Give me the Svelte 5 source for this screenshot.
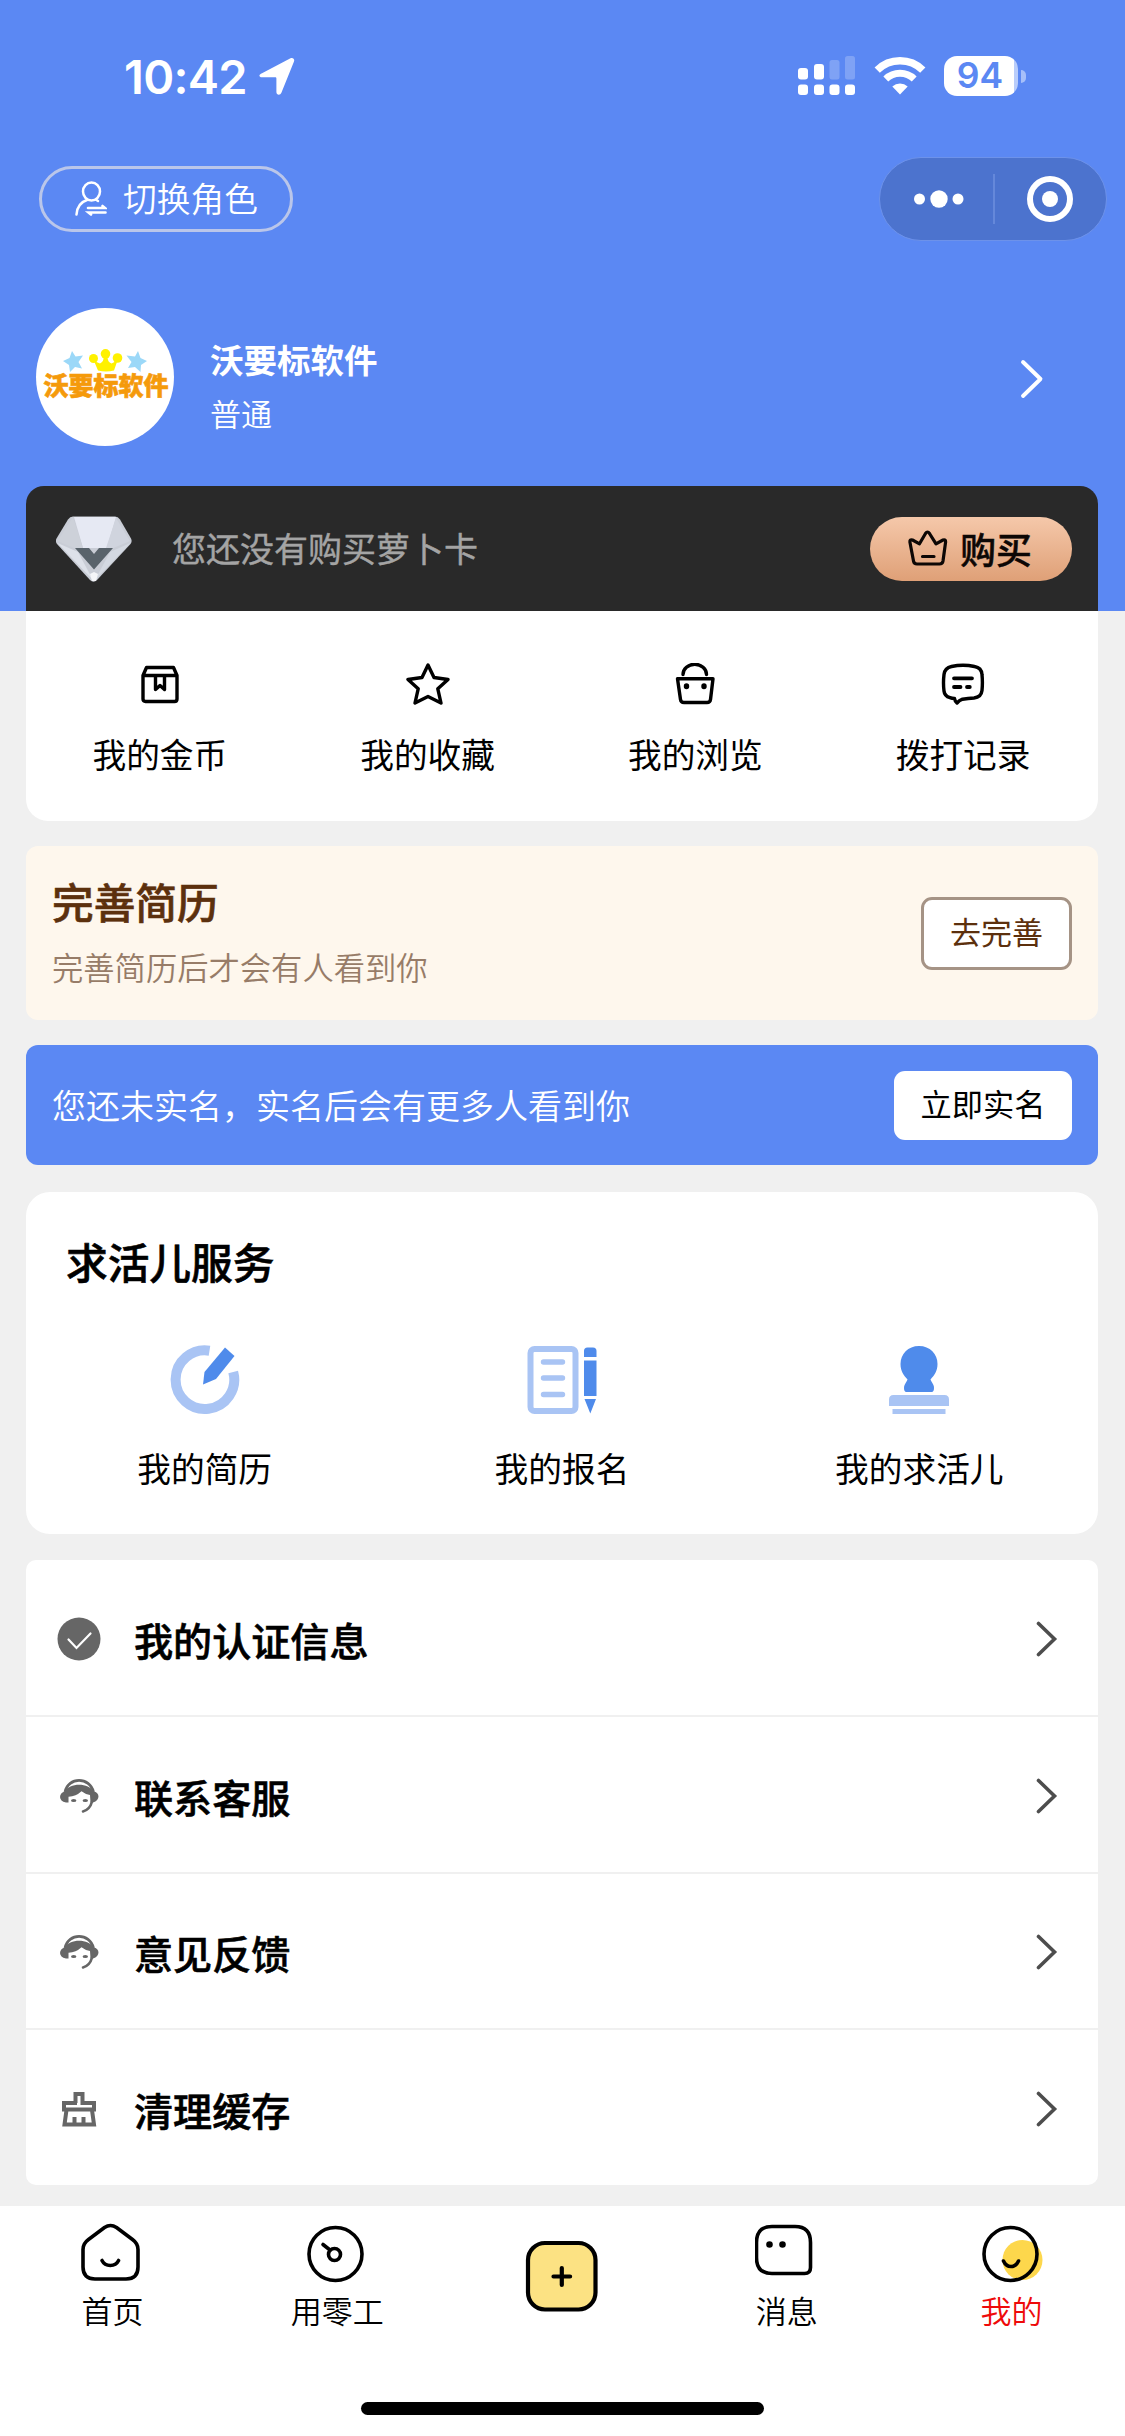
<script>
  const shortcuts = [
    { icon: "coin", label: "我的金币" },
    { icon: "star", label: "我的收藏" },
    { icon: "bag", label: "我的浏览" },
    { icon: "chat", label: "拨打记录" }
  ];

  const services = [
    { icon: "resume", label: "我的简历" },
    { icon: "signup", label: "我的报名" },
    { icon: "stamp", label: "我的求活儿" }
  ];

  const menu = [
    { icon: "verified", label: "我的认证信息" },
    { icon: "support", label: "联系客服" },
    { icon: "support", label: "意见反馈" },
    { icon: "broom", label: "清理缓存" }
  ];

  const tabs = [
    { icon: "home", label: "首页" },
    { icon: "work", label: "用零工" },
    { icon: "add", label: "" },
    { icon: "message", label: "消息" },
    { icon: "mine", label: "我的" }
  ];

  let current = $state("mine");
</script>

<div class="page">
  <header class="hero">
    <div class="status">
      <span class="time">10:42</span>
      <svg class="location" width="36" height="38" viewBox="0 0 36 38" fill="#fff">
        <path d="M3 16.2 31.5 1.3c2.4-1.1 4.4.7 3.5 3.2L22.4 35.8c-1.1 2.7-5 2.4-5-.8V21.6c0-.9-.4-1.3-1.3-1.3H2.9C-.3 20.2-.5 17.6 3 16.2Z" />
      </svg>
      <div class="signals">
        <svg width="58" height="40" viewBox="0 0 58 40" fill="#fff">
          <rect x="0" y="12" width="10" height="11.5" rx="3" />
          <rect x="16" y="8" width="10" height="15.5" rx="3" />
          <rect x="31.5" y="4" width="10" height="19.5" rx="2.5" opacity="0.22" />
          <rect x="47" y="0" width="10" height="23.5" rx="2.5" opacity="0.22" />
          <rect x="0" y="28.5" width="10" height="10.5" rx="3" />
          <rect x="16" y="28.5" width="10" height="10.5" rx="3" />
          <rect x="31.5" y="28.5" width="10" height="10.5" rx="3" />
          <rect x="47" y="28.5" width="10" height="10.5" rx="3" />
        </svg>
        <svg width="52" height="38" viewBox="0 0 52 38" fill="none" stroke="#fff">
          <path d="M3.2 13.2a32.5 32.5 0 0 1 45.6 0" stroke-width="7.5" />
          <path d="M11.8 22a20.5 20.5 0 0 1 28.4 0" stroke-width="7" />
          <path d="M18.3 29.5a11.5 11.5 0 0 1 15.4 0L26 37.5Z" fill="#fff" stroke="none" />
        </svg>
        <div class="battery"><span>94</span></div>
        <i class="knob"></i>
      </div>
    </div>

    <div class="nav">
      <button class="switch">
        <svg width="32" height="35" viewBox="0 0 32 35" fill="none" stroke="#fff" stroke-width="2.5" stroke-linecap="round">
          <ellipse cx="16.500" cy="10.500" rx="8.500" ry="9" />
          <path d="M1.500 33.500C2 26 6 21 12.500 18.800M21 18.800l2 1.200" />
          <path d="M13 27h17l-2.500-2M30.500 31.500h-17l2.500 2" stroke-width="2.600" />
        </svg>
        切换角色
      </button>
      <div class="capsule">
        <svg width="50" height="18" viewBox="0 0 50 18" fill="#fff">
          <circle cx="5.5" cy="9" r="5.5" />
          <circle cx="25" cy="9" r="8.7" />
          <circle cx="44" cy="9" r="5.5" />
        </svg>
        <i class="split"></i>
        <svg width="46" height="46" viewBox="0 0 46 46">
          <circle cx="23" cy="23" r="20" fill="none" stroke="#fff" stroke-width="6" />
          <circle cx="23" cy="23" r="8" fill="#fff" />
        </svg>
      </div>
    </div>

    <div class="profile">
      <div class="avatar">
        <svg width="84" height="24" viewBox="0 0 84 24">
          <g fill="#9bd8f8">
            <path d="m9 2 3.500 5.500 7.500-1-4.500 6.500 3.500 6.500-7-1.500-5 5-1-7L0 12l6.500-3Z" />
            <path d="m75 2-3 5.500-8.500-1 5 6.500-3.500 6 7-1 5.500 5 .5-7 6-4-6.500-3Z" />
          </g>
          <g fill="#fff100">
            <circle cx="30.5" cy="9.5" r="4.5" />
            <circle cx="42.5" cy="4.8" r="4.8" />
            <circle cx="54.5" cy="9" r="4.8" />
            <path d="m31 12 6 2.500q4-2 3.500-6.500h4q0 5 4 6.500l6-3-3.500 10q-8 2-16 0Z" />
          </g>
        </svg>
        <span>沃要标软件</span>
      </div>
      <div class="who">
        <strong>沃要标软件</strong>
        <span>普通</span>
      </div>
      <svg class="go" width="24" height="40" viewBox="0 0 24 40" fill="none" stroke="#fff" stroke-width="3.9" stroke-linecap="round" stroke-linejoin="round">
        <path d="m3 3 17.500 17L3 37" />
      </svg>
    </div>

    <div class="vip">
      <svg width="76" height="66" viewBox="0 0 76 66">
        <path d="M17 .5h42q3 0 5 3l11 19q1.500 3-.5 5.500L41 64q-3.500 3.500-7 0L1 28q-2-2.500-.5-5.500L12 3.500Q14 .5 17 .5Z" fill="#c9cdd6" />
        <path d="M18 1h42l-9 31H27Z" fill="#e6e9f3" />
        <path d="M17 1 1.500 25l19 8 6.500-1Z" fill="#cdd1d9" />
        <path d="m60 2 14 23-19 8-5-1Z" fill="#d0d4de" />
        <path d="m1.500 27 20.500 9 15 28Z" fill="#dde1e9" />
        <path d="M74.500 27 54 36 39 64Z" fill="#d4d9e2" />
        <path d="M19 32h14l5 6 5-6h14L38 53.500Z" fill="#59636b" />
        <path d="m34 58 4-2 4 2-2 7h-4Z" fill="#f4f5f8" />
      </svg>
      <span class="tip">您还没有购买萝卜卡</span>
      <button class="buy">
        <svg width="40" height="36" viewBox="0 0 40 36" fill="none" stroke="#0c0705" stroke-width="3.2" stroke-linecap="round" stroke-linejoin="round">
          <path d="M5.500 31 1.900 12q-.2-3 2.600-2l7 3.800 6-10.300q2-3 4 0l6.500 10.300 7-3.800q2.800-1 2.600 2L35 31q-.5 3-3.500 3h-22.500q-3 0-3.500-3ZM14.500 26.500h11.500" />
        </svg>
        购买
      </button>
    </div>
  </header>

  <section class="shortcuts">
    {#each shortcuts as item}
      <div class="cell">
        <svg width="44" height="42" viewBox="0 0 44 42" fill="none" stroke="#000" stroke-width="3.4" stroke-linecap="round" stroke-linejoin="round">
          {#if item.icon === "coin"}
            <path d="M8.500 4.500h27l3.500 8V36q0 2.500-2.500 2.500h-29Q5 38.500 5 36V12.500ZM5.500 12.500h33" />
            <path d="M17.500 13v13.500l4.500-4 4.500 4V13" />
          {:else if item.icon === "star"}
            <path d="m22 2 6 12.500 14 2-10.200 9.300L35 40l-13-6.500L9 40l3.200-14.200L2 16.500l14-2Z" />
          {:else if item.icon === "bag"}
            <path d="M10 11.500a11.500 10 0 0 1 23.500 0M4.500 15.800h35.500L37.500 36.500q-.4 3-3.500 3H11q-3.100 0-3.500-3Z" />
            <path d="M13.500 23v.6M31 23v.6" stroke-width="5.400" />
          {:else}
            <path d="M10.500 3.500q11.500-2.600 23 0 7 1.200 7.500 8 .8 8 0 16-.8 6.700-8 7.500-6 .4-11.500 1.200-3.200 1.200-5.500 3.800-2-1.300-2.500-4.500-2.500 0-4.500-.8Q3.500 33 3 28q-1-8 0-16.500 .8-6.600 7.500-8Z" />
            <path d="M13 15.300h18M13 24h6.500M26 24h2.800" stroke-width="3.800" />
          {/if}
        </svg>
        <span>{item.label}</span>
      </div>
    {/each}
  </section>

  <section class="resume">
    <div>
      <h2>完善简历</h2>
      <p>完善简历后才会有人看到你</p>
    </div>
    <button>去完善</button>
  </section>

  <section class="realname">
    <span>您还未实名，实名后会有更多人看到你</span>
    <button>立即实名</button>
  </section>

  <section class="services">
    <h2>求活儿服务</h2>
    <div class="row">
      {#each services as item}
        <div class="cell">
          <svg width="70" height="70" viewBox="0 0 70 70">
            {#if item.icon === "resume"}
              <path d="M39.500 5.700A29.300 29.300 0 1 0 63.200 27" fill="none" stroke="#a9c4f4" stroke-width="10" />
              <path d="m55 2.500 9.500 8.500L46 34 33 39.500 34.500 27Z" fill="#4f8beb" />
            {:else if item.icon === "signup"}
              <rect x="3.5" y="4" width="45" height="62" rx="4" fill="none" stroke="#a9c4f4" stroke-width="6" />
              <path d="M16.500 17h19M16.500 33h19M16.500 49.500h19" stroke="#a9c4f4" stroke-width="5.4" stroke-linecap="round" />
              <path d="M57 12V6q0-3.500 3.500-3.500h5.500q3.500 0 3.500 3.500v6ZM57 15.500h12.500V51H57ZM57.500 54H69l-5.700 14.500Z" fill="#4f8beb" />
            {:else}
              <path d="M35 1C46 1 53.500 9 53.500 19c0 7-3 11-7 15.500 1 3.200 3.500 4.500 3.500 8.500 0 2-.5 4-2.500 4h-25c-2 0-2.500-2-2.500-4 0-4 2.500-5.300 3.500-8.500C19.500 30 16.500 26 16.500 19 16.500 9 24 1 35 1Z" fill="#4f8beb" />
              <path d="M5 61v-6.500q0-4.500 4.500-4.500h51q4.500 0 4.500 4.500V61ZM8.500 64h53v5h-53Z" fill="#a9c4f4" />
            {/if}
          </svg>
          <span>{item.label}</span>
        </div>
      {/each}
    </div>
  </section>

  <ul class="menu">
    {#each menu as item}
      <li>
        <svg width="44" height="44" viewBox="0 0 44 44" fill="#666">
          {#if item.icon === "verified"}
            <circle cx="22" cy="22" r="21.5" />
            <path d="m11.500 22.500 8 8.500L33.500 16.500" fill="none" stroke="#fff" stroke-width="2.2" stroke-linecap="round" />
          {:else if item.icon === "support"}
            <path d="M8 18C11 2.500 33 2.500 36.500 18" fill="none" stroke="#666" stroke-width="2.8" />
            <path d="M8 17.500C12 8.500 32 8.500 36.500 17.500 43 18 43.500 26.500 36 28.500H33.500L33 21Q28.500 20.500 24.500 17.300 19 22.500 11.500 22.800V28.500H9C1 27.500 1.500 18.500 8 17.500Z" />
            <path d="M35 27.500Q33 35.500 26 37.500" fill="none" stroke="#666" stroke-width="2.6" stroke-linecap="round" />
            <ellipse cx="16.700" cy="26.500" rx="2.700" ry="1.600" />
            <ellipse cx="28.300" cy="26.500" rx="2.700" ry="1.600" />
          {:else}
            <path d="M18.500 16V7h7v9H37v6.500H7V16h13M9.500 23 7.500 37.500h29.500L35 23M17.500 37v-7M26.500 37v-7" fill="none" stroke="#666" stroke-width="4" />
          {/if}
        </svg>
        <span>{item.label}</span>
        <svg width="22" height="36" viewBox="0 0 22 36" fill="none" stroke="#4d4d4d" stroke-width="3.6" stroke-linecap="round">
          <path d="m2.500 2.500 16 15.500-16 15.500" />
        </svg>
      </li>
    {/each}
  </ul>

  <footer>
    <nav class="tabs">
      {#each tabs as tab}
        <button class:active={current === tab.icon} onclick={() => (current = tab.icon)}>
          {#if tab.icon === "add"}
            <svg width="73" height="73" viewBox="0 0 73 73" fill="none" stroke="#000" stroke-width="4.2" stroke-linecap="round">
              <rect x="3" y="3" width="67.500" height="66.500" rx="17" fill="#fce283" />
              <path d="M36.800 28v17M28.500 36.500h16.600" />
            </svg>
          {:else}
            <svg width="64" height="60" viewBox="0 0 64 60" fill="none" stroke="#000" stroke-width="3.6" stroke-linecap="round" stroke-linejoin="round">
              {#if tab.icon === "home"}
                <path d="M24.500 4.500q6-4 12 0L52.500 16.500q5.500 4 5.500 10V44q0 12-12 12h-31q-12 0-12-12V26.500q0-6 5.500-10Z" />
                <path d="M22 37.500q2.500 5 8.300 5t8.300-5" />
              {:else if tab.icon === "work"}
                <circle cx="30.500" cy="31" r="26.500" />
                <circle cx="29.500" cy="31.500" r="6" />
                <path d="m25 27-7-5.500" />
              {:else if tab.icon === "message"}
                <path d="M17 3.500h23q15.500 0 15.500 16v25q0 6-6 6H17q-15.500 0-15.500-16v-15q0-16 15.500-16Z" />
                <path d="M14.500 21.500v.01M27.500 21.500v.01" stroke-width="6.6" />
              {:else}
                <circle cx="42.500" cy="37" r="20" fill="#fdd74c" stroke="none" />
                <circle cx="30.500" cy="31" r="26.500" />
                <path d="M23.500 38q2.500 5.500 7.500 5.500t7.500-5.500" />
              {/if}
            </svg>
            <span>{tab.label}</span>
          {/if}
        </button>
      {/each}
    </nav>
    <i class="indicator"></i>
  </footer>
</div>

<style>
  :global(body) {
    margin: 0;
  }

  .page,
  .page * {
    box-sizing: border-box;
  }

  .page {
    width: 1125px;
    height: 2436px;
    overflow: hidden;
    display: flex;
    flex-direction: column;
    background: #f0f0f0;
    color: #000;
    font-family: "Noto Sans CJK SC", sans-serif;
    font-size: 33.7px;
    line-height: 40px;
  }

  svg {
    display: block;
    flex: none;
  }

  h2,
  p {
    margin: 0;
  }

  button {
    display: flex;
    justify-content: center;
    align-items: center;
    padding: 0;
    border: none;
    background: none;
    color: inherit;
    font: inherit;
    white-space: nowrap;
  }

  /* header */
  .hero {
    height: 611px;
    display: flex;
    flex-direction: column;
    background: #5b88f3;
    color: #fff;
  }

  .status {
    height: 152px;
    display: flex;
    align-items: center;
    padding: 0 99px 0 124px;
  }

  .time {
    padding-top: 1px;
    font-family: Inter, sans-serif;
    font-size: 47px;
    font-weight: 600;
    letter-spacing: -0.7px;
  }

  .location {
    margin-left: 12px;
  }

  .signals {
    display: flex;
    align-items: center;
    margin-left: auto;
  }

  .signals svg + svg {
    margin: 0 18px;
  }

  .battery {
    width: 74px;
    height: 40px;
    display: flex;
    justify-content: center;
    align-items: center;
    padding-right: 2px;
    border-radius: 13px;
    background: linear-gradient(to right, #fff 70px, #b9cdfb 70px);
    color: #5b88f3;
    font-family: Inter, sans-serif;
    font-size: 35.5px;
    font-weight: 600;
  }

  .knob {
    width: 5px;
    height: 13px;
    margin-left: 3px;
    border-radius: 0 6px 6px 0;
    background: #a6bff9;
  }

  .nav {
    height: 94px;
    display: flex;
    justify-content: space-between;
    align-items: center;
    padding: 0 18px 0 39px;
  }

  .switch {
    width: 254px;
    height: 66px;
    gap: 16px;
    padding: 0 0 2px 1px;
    border: 3px solid #bac6ea;
    border-radius: 33px;
    font-weight: 350;
  }

  .capsule {
    width: 228px;
    height: 84px;
    display: flex;
    align-items: center;
    padding-left: 34px;
    border: 1px solid #6d92ea;
    border-radius: 42px;
    background: #4c73ce;
  }

  .split {
    width: 2px;
    height: 50px;
    margin: 0 32px 0 29px;
    background: #6588da;
  }

  .profile {
    height: 240px;
    display: flex;
    align-items: center;
    padding: 22px 81px 0 36px;
  }

  .avatar {
    width: 138px;
    height: 138px;
    display: flex;
    flex-direction: column;
    align-items: center;
    padding-top: 41px;
    border-radius: 50%;
    background: #fff;
  }

  .avatar span {
    margin: -5px 0 0 2px;
    color: #f59a0b;
    font-size: 25px;
    font-weight: 900;
    line-height: 32px;
    white-space: nowrap;
    -webkit-text-stroke: 0.6px #f59a0b;
  }

  .who {
    display: flex;
    flex-direction: column;
    gap: 15px;
    margin: 16px 0 0 36px;
  }

  .who strong {
    font-size: 33.5px;
    font-weight: 700;
  }

  .who span {
    font-size: 31px;
    font-weight: 350;
    line-height: 38px;
  }

  .go {
    margin: 4px 0 0 auto;
  }

  .vip {
    height: 125px;
    display: flex;
    align-items: center;
    margin: 0 27px 0 26px;
    padding: 0 26px 0 30px;
    border-radius: 18px 18px 0 0;
    background: #292929;
  }

  .tip {
    margin: -1px 0 0 40px;
    color: #a4a4a4;
    font-size: 34px;
    -webkit-text-stroke: 0.4px #a4a4a4;
  }

  .buy {
    width: 202px;
    height: 64px;
    gap: 12px;
    margin-left: auto;
    padding: 0 2px 2px 0;
    border-radius: 32px;
    background: linear-gradient(#f5c8aa, #dfa077);
    color: #0c0705;
    font-size: 35.8px;
    font-weight: 500;
    -webkit-text-stroke: 0.5px #0c0705;
  }

  /* cards */
  .shortcuts {
    height: 210px;
    display: flex;
    margin: 0 27px 0 26px;
    padding-right: 1px;
    border-radius: 0 0 22px 22px;
    background: #fff;
  }

  .cell {
    flex: 1;
    display: flex;
    flex-direction: column;
    align-items: center;
  }

  .shortcuts .cell {
    gap: 29px;
    padding-top: 52px;
  }

  .resume {
    height: 174px;
    display: flex;
    justify-content: space-between;
    align-items: center;
    margin: 25px 27px 0 26px;
    padding: 0 26px;
    border-radius: 12px;
    background: #fef7ed;
    color: #5c300d;
  }

  .resume h2 {
    font-size: 41.7px;
    font-weight: 500;
    line-height: 50px;
    -webkit-text-stroke: 0.6px #5c300d;
  }

  .resume p {
    margin-top: 22px;
    color: #977c68;
    font-size: 31.3px;
    font-weight: 350;
    line-height: 38px;
  }

  .resume div {
    margin-top: -4px;
  }

  .resume button {
    width: 151px;
    height: 73px;
    padding-bottom: 4px;
    border: 3px solid #a59385;
    border-radius: 11px;
    background: #fff;
    font-size: 31px;
  }

  .realname {
    height: 120px;
    display: flex;
    justify-content: space-between;
    align-items: center;
    margin: 25px 27px 0 26px;
    padding: 0 26px;
    border-radius: 12px;
    background: #5b88f3;
    color: #fff;
    font-size: 34px;
    font-weight: 350;
  }

  .realname button {
    width: 178px;
    height: 69px;
    padding-bottom: 4px;
    border-radius: 11px;
    background: #fff;
    color: #000;
    font-size: 31.2px;
    font-weight: 400;
  }

  .services {
    height: 342px;
    margin: 27px 27px 0 26px;
    padding-top: 44px;
    border-radius: 24px;
    background: #fff;
  }

  .services h2 {
    padding-left: 40px;
    font-size: 41.7px;
    font-weight: 500;
    line-height: 50px;
    -webkit-text-stroke: 0.6px #000;
  }

  .row {
    display: flex;
    margin-top: 59px;
  }

  .row .cell {
    gap: 33px;
  }

  .menu {
    height: 625px;
    display: flex;
    flex-direction: column;
    margin: 26px 27px 0 26px;
    padding: 0;
    border-radius: 10px;
    background: #fff;
    list-style: none;
  }

  .menu li {
    flex: 1;
    display: flex;
    align-items: center;
    padding: 3px 40px 0 31px;
  }

  .menu li + li {
    border-top: 2px solid #f0f0f0;
  }

  .menu span {
    flex: 1;
    margin-left: 33px;
    font-size: 39.1px;
    font-weight: 500;
    line-height: 46px;
    -webkit-text-stroke: 0.6px #000;
  }

  /* bottom bar */
  footer {
    flex: 1;
    display: flex;
    flex-direction: column;
    align-items: center;
    margin-top: 21px;
    background: #fff;
  }

  .tabs {
    width: 100%;
    height: 138px;
    display: flex;
    padding-right: 1px;
  }

  .tabs button {
    flex: 1;
    flex-direction: column;
    gap: 8px;
    padding-top: 2px;
    font-size: 31px;
    font-weight: 350;
    line-height: 38px;
  }

  .tabs button.active {
    color: #ee0a0a;
  }

  .indicator {
    width: 403px;
    height: 13px;
    margin-top: 58px;
    border-radius: 7px;
    background: #000;
  }
</style>
